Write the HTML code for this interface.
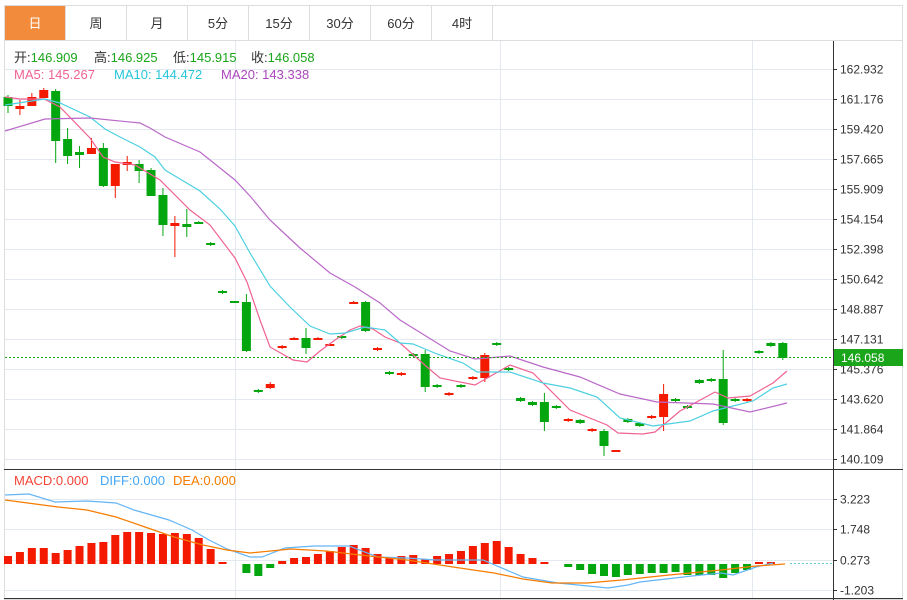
<!DOCTYPE html>
<html><head><meta charset="utf-8"><style>
body{margin:0;background:#fff;width:907px;height:600px;overflow:hidden;font-family:"Liberation Sans","Noto Sans CJK SC",sans-serif}
.tabs{position:absolute;left:4px;top:5px;height:35px;display:flex;border:1px solid #ddd;border-bottom:none;width:897px}
.tab{width:60px;border-right:1px solid #ddd;text-align:center;line-height:35px;font-size:13px;color:#333}
.tab.on{background:#f28c3c;color:#fff}
svg{position:absolute;left:0;top:0}
</style></head><body>
<div class="tabs"><div class="tab on">日</div><div class="tab">周</div><div class="tab">月</div><div class="tab">5分</div><div class="tab">15分</div><div class="tab">30分</div><div class="tab">60分</div><div class="tab">4时</div></div>
<svg id="s" width="907" height="600" style="top:0" font-family="Liberation Sans, Noto Sans CJK SC, sans-serif">
<rect x="4.5" y="40.5" width="898" height="559" fill="none" stroke="#ddd"/>
<g id="grid" stroke="#e3e9ef" stroke-width="1"></g>
<g id="c"></g>
<g font-size="13">
<text x="14" y="62" fill="#333">开:<tspan fill="#1aa51a">146.909</tspan></text>
<text x="94" y="62" fill="#333">高:<tspan fill="#1aa51a">146.925</tspan></text>
<text x="173" y="62" fill="#333">低:<tspan fill="#1aa51a">145.915</tspan></text>
<text x="251" y="62" fill="#333">收:<tspan fill="#1aa51a">146.058</tspan></text>
<text x="14" y="79" fill="#f06292">MA5: 145.267</text>
<text x="114" y="79" fill="#26c6da">MA10: 144.472</text>
<text x="221" y="79" fill="#ab47bc">MA20: 143.338</text>
<text x="14" y="485" fill="#f44336">MACD:0.000</text>
<text x="100" y="485" fill="#42a5f5">DIFF:0.000</text>
<text x="173" y="485" fill="#f57c00">DEA:0.000</text>
</g>
<g id="ax" font-size="12" fill="#333"></g>
<line x1="833.5" y1="41" x2="833.5" y2="600" stroke="#333"/>
<line x1="4" y1="469.5" x2="903" y2="469.5" stroke="#333"/>
<line x1="4" y1="598.5" x2="903" y2="598.5" stroke="#333"/>
<line x1="5" y1="357.5" x2="833" y2="357.5" stroke="#1aa51a" stroke-dasharray="2,2"/>
<rect x="834" y="349" width="69" height="17" fill="#1aa51a"/>
<text x="841" y="362" font-size="12" fill="#fff">146.058</text>
<line x1="790" y1="563.5" x2="833" y2="563.5" stroke="#6cc" stroke-dasharray="2,2"/>
</svg>
<script>
var NS="http://www.w3.org/2000/svg";
function el(p,t,a){var e=document.createElementNS(NS,t);for(var k in a)e.setAttribute(k,a[k]);p.appendChild(e);return e}
var g=document.getElementById('grid'),c=document.getElementById('c'),ax=document.getElementById('ax');
var labs=["162.932","161.176","159.420","157.665","155.909","154.154","152.398","150.642","148.887","147.131","145.376","143.620","141.864","140.109"];
labs.forEach(function(l,i){var y=69.5+i*30;el(g,'line',{x1:5,y1:y,x2:833,y2:y});el(ax,'line',{x1:833,y1:y,x2:837,y2:y,stroke:'#333'});var t=el(ax,'text',{x:840,y:y+4});t.textContent=l;});
[[499,"3.223"],[529,"1.748"],[560,"0.273"],[590,"-1.203"]].forEach(function(a){var y=a[0]+.5;el(g,'line',{x1:5,y1:y,x2:833,y2:y});el(ax,'line',{x1:833,y1:y,x2:837,y2:y,stroke:'#333'});var t=el(ax,'text',{x:840,y:y+4});t.textContent=a[1];});
[235.5,500.5,752.5].forEach(function(x){el(g,'line',{x1:x,y1:41,x2:x,y2:598});});
var R='#f41a00',G='#03a60e';
var K=[[G,97,106,95,113],[R,106,109,100,115],[R,97,106,93,106],[R,90,98,88,98],[G,91,141,89,163],[G,139,156,128,164],[G,152,155,146,168],[R,148,154,138,154],[G,148,186,143,187],[R,164,186,164,198],[R,162,165,156,171],[G,164,171,160,183],[G,170,196,168,196],[G,195,225,188,236],[R,223,226,216,257],[G,224,227,209,237],[G,222,223,221,224],[G,243,245,242,246],[G,291,293,290,294],[G,301,302,301,302],[G,302,351,294,352],[G,390,392,389,393],[R,384,388,382,389],[R,346,348,345,349],[R,338,340,337,340],[G,338,348,328,354],[R,338,340,337,340],[R,344,346,343,346],[G,336,338,335,339],[R,302,304,301,304],[G,302,331,301,332],[R,348,350,347,351],[G,372,374,371,375],[R,373,375,372,376],[G,354,356,353,357],[G,354,387,350,392],[G,385,387,384,388],[R,393,395,392,396],[G,385,387,384,388],[R,377,379,376,380],[R,355,378,353,382],[G,343,345,342,346],[G,368,370,367,371],[G,398,401,397,402],[G,402,405,401,406],[G,402,422,393,431],[G,406,408,405,409],[R,419,421,418,422],[G,420,423,419,424],[R,429,431,428,432],[G,431,446,429,456],[R,450,452,450,452],[G,419,422,418,423],[G,423,426,422,427],[R,416,418,415,419],[R,394,417,384,431],[G,399,401,398,402],[G,406,408,405,409],[G,380,383,379,384],[G,379,381,378,382],[G,379,423,350,425],[G,399,401,398,402],[R,399,401,398,402],[G,351,353,350,354],[G,343,346,342,347],[G,343,358,342,360]];
var H=[556,552,548,548,553,550,546,543,542,535,532,532,533,534,533,534,538,549,562,563,573,576,568,561,558,557,554,551,547,545,548,554,557,556,555,559,556,554,551,546,543,541,547,554,558,562,563,567,570,574,576,577,575,574,573,573,572,575,575,575,578,573,570,562,562,563];
K.forEach(function(k,i){var x=8+i*11.92;var b=k[2]-k[1];if(b<2)b=2;el(c,'line',{x1:x,y1:k[3],x2:x,y2:k[4],stroke:k[0],'stroke-width':1});el(c,'rect',{x:x-4.5,y:k[1],width:9,height:b,fill:k[0]});
var h=H[i];if(h<563)el(c,'rect',{x:x-4,y:h,width:8,height:564-h,fill:R});else if(h>564)el(c,'rect',{x:x-4,y:564,width:8,height:h-564,fill:G});});
function pl(pts,col){el(c,'polyline',{points:pts,fill:'none',stroke:col,'stroke-width':1.2});}
pl("5,97 20,99 44,99 60,107 90,138 103,157 115,162 135,165 160,180 190,210 210,225 235,258 247,282 260,320 270,347 293,360 307,362 320,351 335,340 350,330 360,326 373,329 385,337 400,343 427,367 440,378 475,385 510,365 533,373 570,410 607,425 618,433 643,434 655,432 680,411 715,392 728,398 750,396 773,383 787,371","#f06292");
pl("5,105 45,99 60,103 90,117 105,129 120,137 140,147 155,157 165,170 180,179 200,191 220,209 235,226 250,253 270,286 290,307 310,326 330,334 345,333 365,327 385,330 400,343 413,344 437,354 463,363 477,372 510,372 543,383 570,388 597,397 620,418 653,426 690,421 713,411 753,401 773,388 787,384","#4dd0e1");
pl("5,131 45,119 90,118 140,123 150,128 165,137 200,152 210,160 235,180 250,196 270,220 285,234 300,248 330,273 355,287 380,303 400,320 450,351 475,359 510,356 543,367 580,377 620,394 657,402 713,404 750,412 787,403","#ba68c8");
pl("5,495 29,494 55,502 87,501 116,503 134,510 169,520 192,530 209,540 227,549 250,557 262,557 285,548 314,546 349,546 378,557 407,558 436,560 483,560 523,577 558,583 608,588 628,585 640,582 692,576 721,573 733,575 756,567 773,563","#64b5f6");
pl("5,500 58,507 87,510 116,517 145,527 174,537 203,545 227,550 250,553 291,549 326,551 360,555 407,560 453,567 494,573 523,579 552,583 587,583 622,580 669,575 721,570 756,566 785,564","#f57c00");
</script>
</body></html>
